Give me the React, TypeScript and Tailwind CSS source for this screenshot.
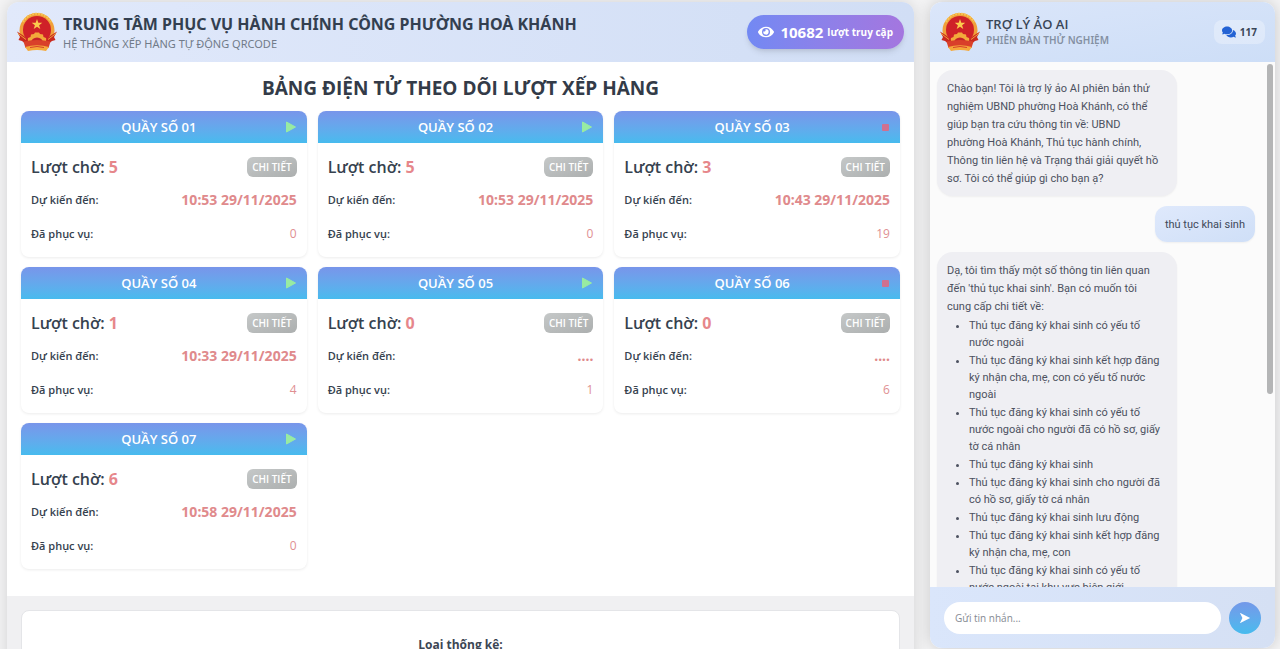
import { FaComments, FaEye } from "react-icons/fa";

type Counter = {
  id: string;
  waiting: number;
  eta: string;
  served: number;
  open: boolean;
};

const COUNTERS: Counter[] = [
  { id: "01", waiting: 5, eta: "10:53 29/11/2025", served: 0, open: true },
  { id: "02", waiting: 5, eta: "10:53 29/11/2025", served: 0, open: true },
  { id: "03", waiting: 3, eta: "10:43 29/11/2025", served: 19, open: false },
  { id: "04", waiting: 1, eta: "10:33 29/11/2025", served: 4, open: true },
  { id: "05", waiting: 0, eta: "....", served: 1, open: true },
  { id: "06", waiting: 0, eta: "....", served: 6, open: false },
  { id: "07", waiting: 6, eta: "10:58 29/11/2025", served: 0, open: true },
];

const SUGGESTIONS = [
  "Thủ tục đăng ký khai sinh có yếu tố nước ngoài",
  "Thủ tục đăng ký khai sinh kết hợp đăng ký nhận cha, mẹ, con có yếu tố nước ngoài",
  "Thủ tục đăng ký khai sinh có yếu tố nước ngoài cho người đã có hồ sơ, giấy tờ cá nhân",
  "Thủ tục đăng ký khai sinh",
  "Thủ tục đăng ký khai sinh cho người đã có hồ sơ, giấy tờ cá nhân",
  "Thủ tục đăng ký khai sinh lưu động",
  "Thủ tục đăng ký khai sinh kết hợp đăng ký nhận cha, mẹ, con",
  "Thủ tục đăng ký khai sinh có yếu tố nước ngoài tại khu vực biên giới",
];

function Emblem() {
  return (
    <svg viewBox="0 0 40 40" className="size-10 shrink-0" aria-hidden="true">
      <circle cx="20" cy="18.5" r="17.5" fill="#f0a03a" />
      <path d="M6 10 A16 16 0 0 1 34 10" fill="none" stroke="#f8c552" strokeWidth="2" strokeDasharray="2 1" />
      <circle cx="20" cy="18" r="14" fill="#cf2128" />
      <path d="M20 7l1.300 3.800h4l-3.200 2.400 1.200 3.900-3.300-2.300-3.300 2.300 1.200-3.900-3.200-2.400h4z" fill="#fbcb4d" />
      {/* Cog wheel */}
      <path d="M10 31 L11 26 L13.500 25 L14 22.500 L17 22 L18 20.500 H22 L23 22 L26 22.500 L26.500 25 L29 26 L30 31z" fill="#f2a93b" />
      <path d="M14 31 a6 5.500 0 0 1 12 0z" fill="#c4212a" />
      {/* Ribbon */}
      <path d="M0 19.500 l7 4.500 4 4 -1 5 -5-4 -3.500-1 1.500-3z M40 19.500 l-7 4.500 -4 4 1 5 5-4 3.500-1 -1.500-3z" fill="#c9291f" />
      <path d="M1 21.500 L9 27.500 M39 21.500 L31 27.500" stroke="#f0a03a" strokeWidth="1" />
      <path d="M6.500 29.500 Q20 26.500 33.500 29.500 L31.500 36 Q20 32.500 8.500 36z" fill="#d9402a" />
      <path d="M8 35 Q20 31.500 32 35 L29 39 Q20 37 11 39z" fill="#f5a93b" />
      <path d="M13 35.500 Q20 33.500 27 35.500" fill="none" stroke="#d9402a" strokeWidth="1" />
    </svg>
  );
}

function CounterCard({ counter }: { counter: Counter }) {
  return (
    <article className="overflow-hidden rounded-lg bg-white shadow-[0_1px_3px_rgba(0,0,0,0.08)]">
      <header className="relative flex h-8 items-center justify-center bg-gradient-to-b from-[#7895ea] to-[#46bbee]">
        <h3 className="pt-0.5 pr-2.5 text-[13px] font-semibold text-white">QUẦY SỐ {counter.id}</h3>
        <svg
          viewBox="0 0 12 12"
          className="absolute right-2.5 size-3"
          role="img"
          aria-label={counter.open ? "Đang mở" : "Tạm dừng"}
        >
          {counter.open ? (
            <path d="M1.500 1 L10.500 6 L1.500 11z" fill="#98eba2" stroke="#98eba2" strokeWidth="1" strokeLinejoin="round" />
          ) : (
            <rect x="4" y="3" width="7" height="7" rx="1" fill="#d0708f" />
          )}
        </svg>
      </header>
      <div className="flex flex-col px-2.5 pt-2 pb-1.5 font-semibold text-[#36424f]">
        <div className="flex h-8 items-center justify-between">
          <p className="text-base">
            Lượt chờ: <span className="font-bold text-[#e6878b]">{counter.waiting}</span>
          </p>
          <button
            type="button"
            className="h-5 rounded-md bg-gradient-to-br from-[#c5c8c8] to-[#acafaf] px-[5px] text-[10px] text-white"
          >
            CHI TIẾT
          </button>
        </div>
        <dl className="text-[11px]">
          <div className="flex h-[34px] items-center justify-between">
            <dt>Dự kiến đến:</dt>
            <dd className="font-['Noto_Sans',sans-serif] text-sm font-bold text-[#e08a8c]">{counter.eta}</dd>
          </div>
          <div className="flex h-[34px] items-center justify-between">
            <dt>Đã phục vụ:</dt>
            <dd className="text-xs font-medium text-[#e08f92]">{counter.served}</dd>
          </div>
        </dl>
      </div>
    </article>
  );
}

function QueueBoard() {
  return (
    <main className="min-w-0 flex-1 rounded-t-xl shadow-[0_0_16px_rgba(0,0,0,0.14)]">
      <header className="flex h-[60px] items-center justify-between rounded-t-xl bg-gradient-to-r from-[#e1e9fb] to-[#d1def5] px-2.5">
        <div className="flex items-center gap-1.5">
          <Emblem />
          <div className="font-['Noto_Sans',sans-serif]">
            <h1 className="text-base leading-6 font-bold text-[#333f50]">
              TRUNG TÂM PHỤC VỤ HÀNH CHÍNH CÔNG PHƯỜNG HOÀ KHÁNH
            </h1>
            <p className="text-[11px] leading-4 text-[#717b89]">HỆ THỐNG XẾP HÀNG TỰ ĐỘNG QRCODE</p>
          </div>
        </div>
        <div className="flex h-[34px] items-center gap-1.5 rounded-full bg-gradient-to-r from-[#7289f3] to-[#a476df] px-[11px] font-bold text-white shadow-md">
          <FaEye className="size-4" />
          <span className="text-[15px]">10682</span>
          <span className="-ml-0.5 text-[10px]">lượt truy cập</span>
        </div>
      </header>

      <section className="bg-white px-3.5 pt-3 pb-[27px]">
        <h2 className="mb-[9px] text-center text-[19px] leading-7 font-bold text-[#333b48]">
          BẢNG ĐIỆN TỬ THEO DÕI LƯỢT XẾP HÀNG
        </h2>
        <div className="grid grid-cols-3 gap-x-[11px] gap-y-2.5">
          {COUNTERS.map((counter) => (
            <CounterCard key={counter.id} counter={counter} />
          ))}
        </div>
      </section>

      <section className="bg-[#f0f0f2] px-3.5 pt-3.5">
        <div className="h-40 rounded-lg border border-[#e4e5e8] bg-white pt-6 text-center">
          <h3 className="text-xs leading-5 font-bold text-[#3c4654]">Loại thống kê:</h3>
        </div>
      </section>
    </main>
  );
}

function ChatPanel() {
  return (
    <aside className="flex h-[646px] w-[345px] shrink-0 flex-col overflow-hidden rounded-xl bg-[#fbfbfb] shadow-[0_0_16px_rgba(0,0,0,0.18)]">
      <header className="flex h-[60px] shrink-0 items-center justify-between bg-gradient-to-br from-[#dbe6fa] to-[#cddef7] px-2.5">
        <div className="flex items-center gap-1.5">
          <Emblem />
          <div>
            <h2 className="text-[13px] leading-4 font-semibold text-[#3a4657]">TRỢ LÝ ẢO AI</h2>
            <p className="font-['Noto_Sans',sans-serif] text-[10px] leading-4 font-semibold text-[#8490a2]">
              PHIÊN BẢN THỬ NGHIỆM
            </p>
          </div>
        </div>
        <div className="flex h-6 items-center gap-1 rounded-lg bg-white/30 px-2 text-[10px] font-bold text-[#3a4657]">
          <FaComments className="size-3.5 text-[#2463d4]" />
          117
        </div>
      </header>

      <div className="relative min-h-0 flex-1 overflow-hidden">
        <div className="flex flex-col gap-2.5 py-2 pr-5 pl-[7px] font-['Roboto','Noto_Sans',sans-serif] text-[11px] leading-[18px] text-[#4c5160]">
          <div className="w-60 self-start rounded-2xl bg-[#efeff3] px-2.5 pt-2.5 pb-2 shadow-xs">
            Chào bạn! Tôi là trợ lý ảo AI phiên bản thử nghiệm UBND phường Hoà Khánh, có thể giúp bạn tra cứu thông tin
            về: UBND
            <br />
            phường Hoà Khánh, Thủ tục hành chính,
            <br />
            Thông tin liên hệ và Trạng thái giải quyết hồ
            <br />
            sơ. Tôi có thể giúp gì cho bạn ạ?
          </div>
          <div className="self-end rounded-xl bg-gradient-to-br from-[#dfe9fc] to-[#cfdff7] px-2.5 pt-2.5 pb-2 text-[#414959] shadow-xs">
            thủ tục khai sinh
          </div>
          <div className="w-60 self-start rounded-2xl bg-[#efeff3] px-2.5 pt-2.5 pb-2 shadow-xs">
            <p>
              Dạ, tôi tìm thấy một số thông tin liên quan đến 'thủ tục khai sinh'. Bạn có muốn tôi
              <br />
              cung cấp chi tiết về:
            </p>
            <ul className="flex list-disc flex-col gap-px pt-px pl-[22px] leading-[17px]">
              {SUGGESTIONS.map((text) => (
                <li key={text}>{text}</li>
              ))}
            </ul>
          </div>
        </div>
        <div className="absolute top-0.5 right-0.5 h-[330px] w-1.5 rounded-full bg-[#b4b5b6]" />
      </div>

      <form
        className="flex h-[61px] shrink-0 items-center gap-2 bg-gradient-to-r from-[#dae6fb] to-[#d5e0f4] px-3.5"
        onSubmit={(e) => e.preventDefault()}
      >
        <input
          type="text"
          aria-label="Tin nhắn"
          placeholder="Gửi tin nhắn..."
          className="h-8 min-w-0 flex-1 rounded-full bg-white px-[11px] text-[10px] text-[#4c5160] outline-none placeholder:text-[#858a92]"
        />
        <button
          type="submit"
          aria-label="Gửi"
          className="flex size-8 shrink-0 items-center justify-center rounded-full bg-gradient-to-b from-[#7398e9] to-[#45bbee] text-white"
        >
          <svg viewBox="0 0 14 14" className="size-3" fill="currentColor" aria-hidden="true">
            <path d="M1 1 L13 7 L1 13 L4 7z" />
          </svg>
        </button>
      </form>
    </aside>
  );
}

export default function App() {
  return (
    <div className="flex h-screen items-start gap-4 overflow-hidden bg-[#f4f4f5] pt-0.5 pr-[5px] pl-[7px] font-['Open_Sans','Noto_Sans',sans-serif]">
      <QueueBoard />
      <ChatPanel />
    </div>
  );
}
